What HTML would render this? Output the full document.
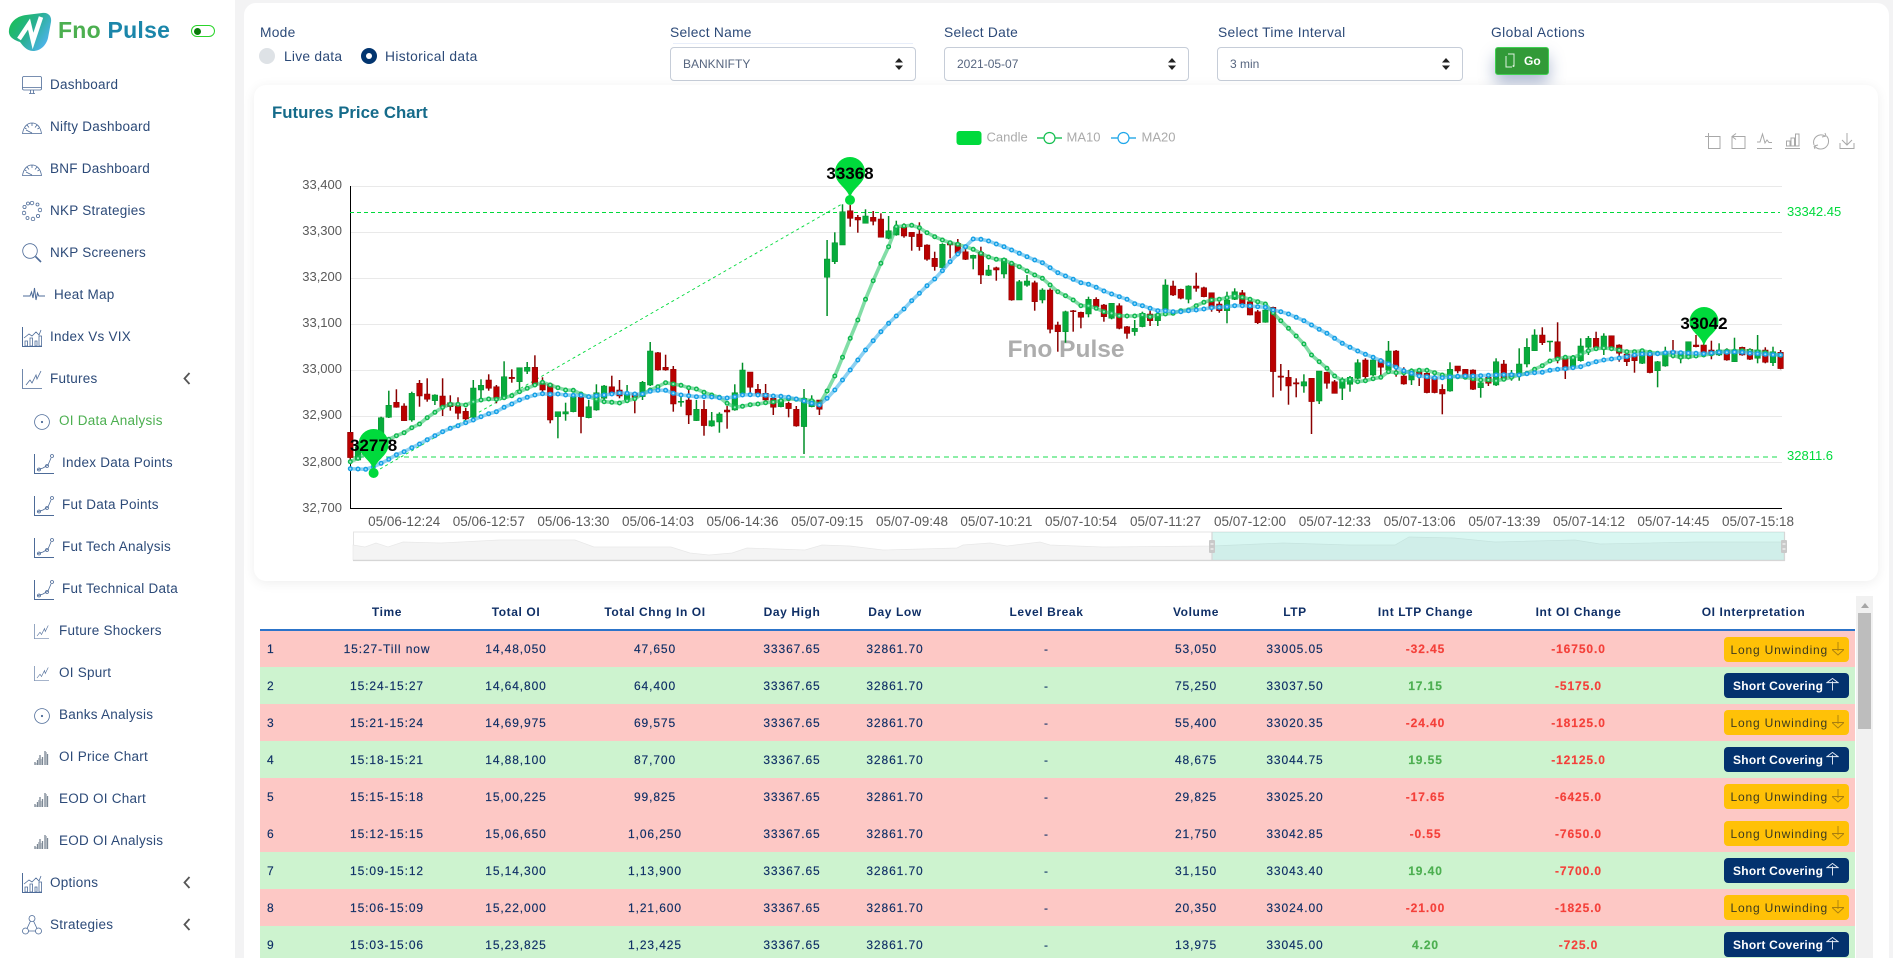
<!DOCTYPE html>
<html lang="en">
<head>
<meta charset="utf-8">
<title>Fno Pulse</title>
<style>
*{box-sizing:border-box}
html,body{margin:0;padding:0;width:1893px;height:958px;overflow:hidden;background:#f3f3f4;font-family:"Liberation Sans",sans-serif;color:#2b4a78}
aside{position:absolute;left:0;top:0;width:235px;height:958px;background:#fff;overflow:hidden}
.brand{position:absolute;left:58px;top:16px;font-size:23px;font-weight:700;letter-spacing:.25px;line-height:28px;white-space:nowrap}
.brand b:first-child{color:#4caf50}.brand b:last-child{color:#1b86aa}
.tog{position:absolute;left:191px;top:25px;width:24px;height:12px;border:1.5px solid #2bd42b;border-radius:7px;background:#fff}
.tog i{position:absolute;left:2px;top:1.5px;width:7px;height:7px;border-radius:50%;background:#0a7a0a}
nav a{position:absolute;height:20px;line-height:20px;margin-top:1px;font-size:13.5px;letter-spacing:.25px;color:#2c4a78;white-space:nowrap;text-decoration:none}
nav a.on{color:#4caf50}
nav svg{position:absolute;overflow:visible;fill:none;stroke:#4d6b98;stroke-width:.8}
main{position:absolute;left:244px;top:3px;width:1645px;height:955px;background:#fff;border-radius:12px 12px 0 0}
.lb{position:absolute;font-size:13.8px;letter-spacing:.25px;line-height:18px;margin-top:1px;color:#2c4a78;white-space:nowrap}
.rd{position:absolute;width:16px;height:16px;border-radius:50%;background:#dee2e6;top:46px}
.rd.on{background:#02356f}.rd.on:after{content:"";position:absolute;left:5px;top:5px;width:6px;height:6px;border-radius:50%;background:#fff}
select{position:absolute;top:47px;height:34px;border:1px solid #c6cdd8;border-radius:4px;background:#fff;appearance:none;-webkit-appearance:none;font:12px "Liberation Sans",sans-serif;color:#56657f;padding:0 12px;outline:0}
.ar{position:absolute;top:58px;width:8px;height:12px}
.go{position:absolute;left:1495px;top:47px;width:54px;height:28px;background:#329a38;border:1px solid #3fd052;border-radius:3px;box-shadow:0 9px 16px rgba(30,60,130,.35);color:#fff;font-size:12px;font-weight:700;line-height:26px;padding-left:28px}
.go svg{position:absolute;left:9px;top:5px}
.card{position:absolute;left:254px;top:85px;width:1624px;height:496px;background:#fff;border-radius:12px;box-shadow:0 2px 12px rgba(0,0,0,.07)}
.card h3{position:absolute;left:18px;top:17px;margin:0;font-size:16.8px;line-height:22px;color:#156b8a;font-weight:700;white-space:nowrap}
#chart{position:absolute;left:0;top:0}
#chart text{font-family:"Liberation Sans",sans-serif}
.tw{position:absolute;left:260px;top:596px;width:1613px;height:362px;overflow:hidden}
table{position:absolute;left:0;top:0;width:1595px;table-layout:fixed;border-collapse:collapse;font-size:12px;color:#0f2f66;letter-spacing:.9px}
th{height:34px;font-weight:700;letter-spacing:.6px;color:#0f2f66;border-bottom:2px solid #2c74c9;padding:0 0 2px;text-align:center}
td{height:37px;padding:0;text-align:center;white-space:nowrap;-webkit-text-stroke:.15px}
td:first-child{text-align:left;padding-left:7px}
tr.r td{background:#fdc8c5}tr.g td{background:#cdf3cf}
.neg{color:#f4403a;font-weight:700}.pos{color:#4caf50;font-weight:700}
.bt{display:block;margin:0 6px 0 auto;width:125px;height:25px;line-height:26.5px;border-radius:4px;font-size:12px;text-align:left;padding-left:6.5px;position:relative;-webkit-text-stroke:0}
.bt svg{position:absolute;right:5px;top:5px}
.bt.l{background:#ffc107;color:#3c3a20;letter-spacing:.82px}
.bt.s{background:#03326e;color:#fff;font-weight:700;letter-spacing:.25px;padding-left:9px}
.sb{position:absolute;left:1596px;top:0;width:17px;height:362px;background:#f1f1f1}
.sb i{position:absolute;left:2px;top:17px;width:13px;height:116px;background:#bdbdbd}
.sb b{position:absolute;left:4.5px;top:7px;width:0;height:0;border:4px solid transparent;border-top:0;border-bottom:5px solid #a6a6a6}
</style>
</head>
<body>
<svg width="0" height="0" style="position:absolute">
<defs>
<linearGradient id="lg" x1="0" y1="0" x2="1" y2=".6"><stop offset="0" stop-color="#16c24a"/><stop offset=".55" stop-color="#28b08f"/><stop offset="1" stop-color="#4db3e8"/></linearGradient>
<symbol id="mon" viewBox="0 0 20 18"><rect x=".5" y=".5" width="19" height="13.5" rx="1.5"/><path d="M.5 11.5H19.5M7 17.5H13M8.5 14V17.5M11.5 14V17.5"/></symbol>
<symbol id="gau" viewBox="0 0 20 12"><path d="M.5 11.5C1.5 5 5 1 10 1S18.500 5 19.500 11.500ZM4 8L10 11M10 1V4M5 3L7 5.500M15 3L13 5.500M3 6L4.500 7M17 6L15.500 7"/></symbol>
<symbol id="chn" viewBox="0 0 20 20"><circle cx="10" cy="2" r="1.800"/><circle cx="15.500" cy="3.500" r="1.500"/><circle cx="18" cy="9" r="1.800"/><circle cx="16" cy="15" r="1.600"/><circle cx="11" cy="18" r="1.800"/><circle cx="5.500" cy="17" r="1.500"/><circle cx="2" cy="12" r="1.800"/><circle cx="2.500" cy="6" r="1.600"/><circle cx="6" cy="2.500" r="1.500"/></symbol>
<symbol id="sea" viewBox="0 0 20 20"><circle cx="8" cy="8" r="7.300"/><path d="M13.500 13.500L19 19" stroke-width="1.600"/></symbol>
<symbol id="pul" viewBox="0 0 22 14"><path d="M0 9H7L8.500 5L10 11L11.500 1L13 13L14.500 6L15.800 9H22" stroke-width="1"/></symbol>
<symbol id="vix" viewBox="0 0 20 20"><path d="M.5 0V19.500H20" stroke-width="1"/><path d="M3 19V14H5.500V19ZM8 19V11H10.500V19ZM13 19V14H15V19ZM17 19V9H19.500V19ZM2 11L7 7L10 9L14 5L17 8L19 3"/></symbol>
<symbol id="fut" viewBox="0 0 20 20"><path d="M.5 0V19.500H20"/><path d="M4 16L8 11L10 14L14 6L15 10L19 2"/></symbol>
<symbol id="oi" viewBox="0 0 16 16"><circle cx="8" cy="8" r="7.400"/><circle cx="8" cy="8" r=".7" fill="#4d6b98"/></symbol>
<symbol id="pts" viewBox="0 0 20 22"><path d="M.5 1V20.500H20" stroke-width="1"/><path d="M3 17L9 15L14 12L17 5"/><circle cx="5" cy="16.500" r="1.500"/><circle cx="13" cy="13" r="1.500"/><circle cx="18" cy="3" r="1.500"/></symbol>
<symbol id="bar" viewBox="0 0 16 16"><path d="M1 16V13M3.500 16V11M6 16V6M8.500 16V8M11 16V2M13.500 16V5" stroke="#7b8794" stroke-width="1.300"/><path d="M2.200 16V14M4.700 16V9M7.200 16V10M12.300 16V3" stroke="#a9b1ba" stroke-width="1"/></symbol>
<symbol id="tri" viewBox="0 0 20 20"><circle cx="10" cy="3.500" r="3"/><circle cx="3.500" cy="16" r="3"/><circle cx="16.500" cy="16" r="3"/><path d="M8.500 6L5 13.500M11.500 6L15 13.500M6.500 16H13.500"/></symbol>
<symbol id="dn" viewBox="0 0 12 14"><path d="M6 0V9M0 7.500H12L6 13Z" fill="none" stroke="#a97f10" stroke-width=".9"/></symbol>
<symbol id="up" viewBox="0 0 14 14"><path d="M7 4V14M1 5.500L7 1L13 5.500Z" fill="none" stroke="#e8eef8" stroke-width="1"/></symbol>
</defs>
</svg>

<aside>
<svg style="position:absolute;left:5px;top:8px" width="60" height="48" viewBox="0 0 60 48">
<path d="M4 22C5 14 12 8 21 7L37 5C43 4 47 8 46 14L43 30C41 38 35 43 28 43C22 43 18 38 15 34C9 32 3 29 4 22Z" fill="url(#lg)"/>
<path d="M14 31L24 16L28 33L36 9" fill="none" stroke="#fff" stroke-width="4.500" stroke-linejoin="miter"/>
</svg>
<div class="brand"><b>Fno </b><b>Pulse</b></div>
<div class="tog"><i></i></div>
<nav>
<a style="left:50px;top:74px">Dashboard</a><svg style="left:22px;top:76px" width="20" height="18"><use href="#mon"/></svg>
<a style="left:50px;top:116px">Nifty Dashboard</a><svg style="left:22px;top:122px" width="20" height="12"><use href="#gau"/></svg>
<a style="left:50px;top:158px">BNF Dashboard</a><svg style="left:22px;top:164px" width="20" height="12"><use href="#gau"/></svg>
<a style="left:50px;top:200px">NKP Strategies</a><svg style="left:22px;top:201px" width="20" height="20"><use href="#chn"/></svg>
<a style="left:50px;top:242px">NKP Screeners</a><svg style="left:22px;top:243px" width="20" height="20"><use href="#sea"/></svg>
<a style="left:54px;top:284px">Heat Map</a><svg style="left:23px;top:287px" width="22" height="14" ><use href="#pul"/></svg>
<a style="left:50px;top:326px">Index Vs VIX</a><svg style="left:22px;top:327px" width="20" height="20"><use href="#vix"/></svg>
<a style="left:50px;top:368px">Futures</a><svg style="left:22px;top:369px" width="20" height="20"><use href="#fut"/></svg>
<svg style="left:183px;top:372px" width="8" height="13"><path d="M6.500 1L1.500 6.500L6.500 12" stroke="#555" stroke-width="1.800"/></svg>
<a class="on" style="left:59px;top:410px">OI Data Analysis</a><svg style="left:34px;top:414px" width="16" height="16"><use href="#oi"/></svg>
<a style="left:62px;top:452px">Index Data Points</a><svg style="left:34px;top:453px" width="20" height="22"><use href="#pts"/></svg>
<a style="left:62px;top:494px">Fut Data Points</a><svg style="left:34px;top:495px" width="20" height="22"><use href="#pts"/></svg>
<a style="left:62px;top:536px">Fut Tech Analysis</a><svg style="left:34px;top:537px" width="20" height="22"><use href="#pts"/></svg>
<a style="left:62px;top:578px">Fut Technical Data</a><svg style="left:34px;top:579px" width="20" height="22"><use href="#pts"/></svg>
<a style="left:59px;top:620px">Future Shockers</a><svg style="left:34px;top:624px" width="15" height="15"><use href="#fut"/></svg>
<a style="left:59px;top:662px">OI Spurt</a><svg style="left:34px;top:666px" width="15" height="15"><use href="#fut"/></svg>
<a style="left:59px;top:704px">Banks Analysis</a><svg style="left:34px;top:708px" width="16" height="16"><use href="#oi"/></svg>
<a style="left:59px;top:746px">OI Price Chart</a><svg style="left:34px;top:749px" width="16" height="16"><use href="#bar"/></svg>
<a style="left:59px;top:788px">EOD OI Chart</a><svg style="left:34px;top:791px" width="16" height="16"><use href="#bar"/></svg>
<a style="left:59px;top:830px">EOD OI Analysis</a><svg style="left:34px;top:833px" width="16" height="16"><use href="#bar"/></svg>
<a style="left:50px;top:872px">Options</a><svg style="left:22px;top:873px" width="20" height="20"><use href="#vix"/></svg>
<svg style="left:183px;top:876px" width="8" height="13"><path d="M6.500 1L1.500 6.500L6.500 12" stroke="#555" stroke-width="1.800"/></svg>
<a style="left:50px;top:914px">Strategies</a><svg style="left:22px;top:915px" width="20" height="20"><use href="#tri"/></svg>
<svg style="left:183px;top:918px" width="8" height="13"><path d="M6.500 1L1.500 6.500L6.500 12" stroke="#555" stroke-width="1.800"/></svg>
</nav>
</aside>

<main></main>

<div class="lb" style="left:260px;top:23px">Mode</div>
<span class="rd" style="left:259px;top:48px"></span><div class="lb" style="left:284px;top:47px">Live data</div>
<span class="rd on" style="left:361px;top:48px"></span><div class="lb" style="left:385px;top:47px;letter-spacing:.35px">Historical data</div>

<div class="lb" style="left:670px;top:23px">Select Name</div>
<div style="position:absolute;left:673px;top:43px;width:240px;height:1px;background:#e8eefa"></div>
<select style="left:670px;width:246px"><option>BANKNIFTY</option></select>
<svg class="ar" style="left:895px" viewBox="0 0 8 12"><path d="M4 0L8 4.500H0ZM4 12L8 7.500H0Z" fill="#222"/></svg>

<div class="lb" style="left:944px;top:23px">Select Date</div>
<select style="left:944px;width:245px"><option>2021-05-07</option></select>
<svg class="ar" style="left:1168px" viewBox="0 0 8 12"><path d="M4 0L8 4.500H0ZM4 12L8 7.500H0Z" fill="#222"/></svg>

<div class="lb" style="left:1218px;top:23px;letter-spacing:.32px">Select Time Interval</div>
<select style="left:1217px;width:246px"><option>3 min</option></select>
<svg class="ar" style="left:1442px" viewBox="0 0 8 12"><path d="M4 0L8 4.500H0ZM4 12L8 7.500H0Z" fill="#222"/></svg>

<div class="lb" style="left:1491px;top:23px;letter-spacing:.42px">Global Actions</div>
<div class="go"><svg width="10" height="15" viewBox="0 0 10 15"><path d="M3 1H9V13M1 3V14H7" fill="none" stroke="#dff2e0" stroke-width="1"/><circle cx="8.500" cy="13" r="1" fill="#dff2e0"/></svg>Go</div>

<section class="card"><h3>Futures Price Chart</h3></section>

<svg id="chart" width="1893" height="600" viewBox="0 0 1893 600" fill="none" style="position:absolute;left:0;top:0">
<!-- grid -->
<g stroke="#e9e9e9" stroke-width="1">
<path d="M350 186.500H1782M350 232.500H1782M350 278.500H1782M350 324.500H1782M350 370.500H1782M350 416.500H1782M350 462.500H1782"/>
</g>
<path d="M350.500 186V508.500H1782" stroke="#000" stroke-width="1"/>
<g font-size="13" fill="#5a5a5a" text-anchor="end">
<text x="342" y="189">33,400</text><text x="342" y="235">33,300</text><text x="342" y="281">33,200</text><text x="342" y="327">33,100</text><text x="342" y="373">33,000</text><text x="342" y="419">32,900</text><text x="342" y="466">32,800</text><text x="342" y="512">32,700</text>
</g>
<g font-size="13.500" fill="#5a5a5a" text-anchor="middle">
<text x="404.200" y="526">05/06-12:24</text><text x="488.800" y="526">05/06-12:57</text><text x="573.400" y="526">05/06-13:30</text><text x="658" y="526">05/06-14:03</text><text x="742.500" y="526">05/06-14:36</text><text x="827.200" y="526">05/07-09:15</text><text x="912" y="526">05/07-09:48</text><text x="996.400" y="526">05/07-10:21</text><text x="1081" y="526">05/07-10:54</text><text x="1165.500" y="526">05/07-11:27</text><text x="1250" y="526">05/07-12:00</text><text x="1334.800" y="526">05/07-12:33</text><text x="1419.600" y="526">05/07-13:06</text><text x="1504.400" y="526">05/07-13:39</text><text x="1589" y="526">05/07-14:12</text><text x="1673.400" y="526">05/07-14:45</text><text x="1758" y="526">05/07-15:18</text>
</g>
<text x="1066" y="357" font-size="24.500" font-weight="700" fill="#adadad" text-anchor="middle">Fno Pulse</text>
<!-- marks -->
<path d="M350 212.500H1780" stroke="#00da3c" stroke-dasharray="4 3"/>
<path d="M350 457H1780" stroke="#00da3c" stroke-opacity=".6" stroke-width="1.400" stroke-dasharray="5 4"/>
<path d="M380 469L842 204" stroke="#00da3c" stroke-dasharray="3 3" stroke-width=".9"/>
<text x="1787" y="216" font-size="13" fill="#00da3c">33342.45</text>
<text x="1787" y="460" font-size="13" fill="#00da3c">32811.6</text>
<g id="cd"></g>
<g id="ml"></g>
<!-- pins -->
<g fill="#00da3c">
<path d="M850 198C847 187 835 184 835 172A15 15 0 1 1 865 172C865 184 853 187 850 198Z"/><circle cx="850" cy="200" r="5"/>
<path d="M373.600 470C370.600 459 358.600 456 358.600 444A15 15 0 1 1 388.600 444C388.600 456 376.600 459 373.600 470Z"/><circle cx="373.600" cy="473" r="5"/>
<path d="M1704 346C1701 335 1689.500 332 1689.500 321.500A14.500 14.500 0 1 1 1718.500 321.500C1718.500 332 1707 335 1704 346Z"/>
</g>
<g font-size="17" font-weight="700" fill="#000" text-anchor="middle">
<text x="850" y="179">33368</text><text x="373.600" y="451">32778</text><text x="1704" y="329">33042</text>
</g>
<!-- legend -->
<rect x="956.500" y="131" width="25" height="14" rx="3" fill="#00da3c"/>
<g font-size="13" fill="#aaa"><text x="986.500" y="141.500">Candle</text><text x="1066.500" y="141.500">MA10</text><text x="1141.500" y="141.500">MA20</text></g>
<path d="M1037 138H1062" stroke="#27c45e" stroke-width="1.500"/><circle cx="1049.500" cy="138" r="5.500" fill="#fff" stroke="#14bf50" stroke-width="1.200"/>
<path d="M1111 138H1136" stroke="#34aee8" stroke-width="1.500"/><circle cx="1123.500" cy="138" r="5.500" fill="#fff" stroke="#1fa7ea" stroke-width="1.200"/>
<!-- toolbox -->
<g stroke="#a8a8a8" stroke-width="1">
<path d="M1705 136.500H1720V148.500H1708.500V133"/>
<path d="M1732 148.500V136.500H1745V148.500ZM1732 136.500L1736 133.500M1732 136.500L1736 139.500"/>
<path d="M1757 148.500H1772M1757 142H1760L1762.500 134L1765 143L1767 140L1769 142.500H1772"/>
<path d="M1785 148.500H1800M1786.500 146V141H1790V146ZM1791 146V138H1794.500V146ZM1795.500 146V134H1799V146Z"/>
<path d="M1814 145A7.500 7.500 0 0 1 1825 136M1826 136L1825 133M1826 136L1822 137M1826.500 136A7.500 7.500 0 0 1 1815 146.500M1814 146L1815 149M1814 146L1818 145"/>
<path d="M1847 133V145M1842 140L1847 145L1852 140M1840 143V148.500H1854V143"/>
</g>
<!-- slider -->
<rect x="353.500" y="532" width="1431" height="28.500" fill="#fff" stroke="#e4e4e4"/>
<path d="M353 545L365 547L376 543L388 547L403 542L441 543L499 540L575 540L594 547L633 547L671 547L690 553L709 555L732 553L747 548L805 550L822 545L850 546L883 550L957 548L963 545L990 543L1007 546L1040 542L1050 545L1103 547L1212 546L1283 543L1350 545L1395 545L1409 537L1454 538L1495 542L1575 540L1600 544L1696 542L1784 542V560H353Z" fill="#f4f4f4" stroke="#e8e8e8" stroke-width=".7"/>
<rect x="1212" y="532" width="572" height="28" fill="#2fd0b5" fill-opacity=".18"/>
<path d="M1212 532V560M1784.500 532V561M353 560.500H1785" stroke="#d6d6d6" stroke-width="1.200"/>
<rect x="1209" y="540" width="6" height="13" rx="1" fill="#c9c9c9"/><rect x="1781" y="540" width="6" height="13" rx="1" fill="#c9c9c9"/>
<path d="M1210.500 544H1213.500M1210.500 549H1213.500M1782.500 544H1785.500M1782.500 549H1785.500" stroke="#fff"/>
</svg>

<div class="tw">
<table>
<colgroup><col style="width:41px"><col style="width:172px"><col style="width:86px"><col style="width:192px"><col style="width:82px"><col style="width:124px"><col style="width:179px"><col style="width:120px"><col style="width:78px"><col style="width:183px"><col style="width:123px"><col style="width:215px"></colgroup>
<thead><tr><th></th><th>Time</th><th>Total OI</th><th>Total Chng In OI</th><th>Day High</th><th>Day Low</th><th>Level Break</th><th>Volume</th><th>LTP</th><th>Int LTP Change</th><th>Int OI Change</th><th style="padding-left:12px">OI Interpretation</th></tr></thead>
<tbody>
<tr class="r"><td>1</td><td>15:27-Till now</td><td>14,48,050</td><td>47,650</td><td>33367.65</td><td>32861.70</td><td>-</td><td>53,050</td><td>33005.05</td><td class="neg">-32.45</td><td class="neg">-16750.0</td><td><span class="bt l">Long Unwinding<svg width="12" height="14"><use href="#dn"/></svg></span></td></tr>
<tr class="g"><td>2</td><td>15:24-15:27</td><td>14,64,800</td><td>64,400</td><td>33367.65</td><td>32861.70</td><td>-</td><td>75,250</td><td>33037.50</td><td class="pos">17.15</td><td class="neg">-5175.0</td><td><span class="bt s">Short Covering<svg width="13" height="14" viewBox="0 0 14 14" style="right:10px;top:4px"><use href="#up"/></svg></span></td></tr>
<tr class="r"><td>3</td><td>15:21-15:24</td><td>14,69,975</td><td>69,575</td><td>33367.65</td><td>32861.70</td><td>-</td><td>55,400</td><td>33020.35</td><td class="neg">-24.40</td><td class="neg">-18125.0</td><td><span class="bt l">Long Unwinding<svg width="12" height="14"><use href="#dn"/></svg></span></td></tr>
<tr class="g"><td>4</td><td>15:18-15:21</td><td>14,88,100</td><td>87,700</td><td>33367.65</td><td>32861.70</td><td>-</td><td>48,675</td><td>33044.75</td><td class="pos">19.55</td><td class="neg">-12125.0</td><td><span class="bt s">Short Covering<svg width="13" height="14" viewBox="0 0 14 14" style="right:10px;top:4px"><use href="#up"/></svg></span></td></tr>
<tr class="r"><td>5</td><td>15:15-15:18</td><td>15,00,225</td><td>99,825</td><td>33367.65</td><td>32861.70</td><td>-</td><td>29,825</td><td>33025.20</td><td class="neg">-17.65</td><td class="neg">-6425.0</td><td><span class="bt l">Long Unwinding<svg width="12" height="14"><use href="#dn"/></svg></span></td></tr>
<tr class="r"><td>6</td><td>15:12-15:15</td><td>15,06,650</td><td>1,06,250</td><td>33367.65</td><td>32861.70</td><td>-</td><td>21,750</td><td>33042.85</td><td class="neg">-0.55</td><td class="neg">-7650.0</td><td><span class="bt l">Long Unwinding<svg width="12" height="14"><use href="#dn"/></svg></span></td></tr>
<tr class="g"><td>7</td><td>15:09-15:12</td><td>15,14,300</td><td>1,13,900</td><td>33367.65</td><td>32861.70</td><td>-</td><td>31,150</td><td>33043.40</td><td class="pos">19.40</td><td class="neg">-7700.0</td><td><span class="bt s">Short Covering<svg width="13" height="14" viewBox="0 0 14 14" style="right:10px;top:4px"><use href="#up"/></svg></span></td></tr>
<tr class="r"><td>8</td><td>15:06-15:09</td><td>15,22,000</td><td>1,21,600</td><td>33367.65</td><td>32861.70</td><td>-</td><td>20,350</td><td>33024.00</td><td class="neg">-21.00</td><td class="neg">-1825.0</td><td><span class="bt l">Long Unwinding<svg width="12" height="14"><use href="#dn"/></svg></span></td></tr>
<tr class="g"><td>9</td><td>15:03-15:06</td><td>15,23,825</td><td>1,23,425</td><td>33367.65</td><td>32861.70</td><td>-</td><td>13,975</td><td>33045.00</td><td class="pos">4.20</td><td class="neg">-725.0</td><td><span class="bt s">Short Covering<svg width="13" height="14" viewBox="0 0 14 14" style="right:10px;top:4px"><use href="#up"/></svg></span></td></tr>
</tbody>
</table>
<div class="sb"><b></b><i></i></div>
</div>

<script>
(function(){
var A="r427,503,427,510 g470,510,455,512 g450,490,440,495 g440,480,430,490 g383,432,380,450 g346,382,302,384 r337,352,298,353 r348,392,340,392 g310,390,305,395 r280,318,270,350 r312,328,265,335 g315,332,313,345 r318,350,265,378 r338,350,316,362 r348,370,322,388 r364,387,354,390 g294,382,270,385 g286,300,268,330 r270,295,253,302 r290,325,285,340 g260,325,214,328 r262,266,238,278 g233,275,233,305 g232,244,216,252 r232,285,196,290 r280,300,262,305 r282,390,278,400 g365,380,365,445 g365,372,338,392 g320,365,315,367 r322,380,318,430 g350,383,330,385 g308,360,283,362 g288,325,285,330 r290,310,257,318 r300,318,270,325 g312,330,285,335 r310,322,305,370 g277,320,273,330 g183,285,156,288 r188,240,186,242 r232,240,194,242 r238,342,228,365 g334,337,320,350 r330,375,300,402 g358,392,330,393 r358,407,330,437 g392,408,366,410 g372,396,367,428 r360,366,348,416 g308,360,283,362 g240,310,218,312 r246,292,246,312 r298,312,282,316 r310,330,282,332 r325,352,316,375 g330,350,320,352 r340,356,335,382 r358,408,348,410 g325,410,297,492 g330,350,316,352 r330,358,330,375";
var B="g777,832,720,948 g728,785,697,792 g635,735,613,735 r632,655,615,680 r652,660,645,698 g648,670,628,670 r652,664,633,676 r657,712,640,712 g692,715,648,718 g680,705,662,707 r682,708,670,713 r697,710,697,752 r702,740,667,752 r735,778,733,782 r775,800,755,812 g733,803,730,805 r728,735,725,775 r730,760,717,762 r755,778,735,780 g766,775,764,808 r757,825,740,852 g810,826,795,828 r803,810,800,842 g776,822,773,835 r790,900,785,902 g845,900,840,900 g843,856,825,860 r848,905,842,932 g870,900,865,910 r870,988,865,1000";
var C="r105,125,95,185 g65,125,62,158 r62,65,60,125 r67,82,65,115 g28,72,20,82 r28,50,22,58 r45,80,42,95 g40,85,40,88 r47,115,40,118 r110,130,108,146 g115,125,90,137 g70,110,65,112 r72,92,62,108 g72,92,65,108 g-15,60,-32,62 r-12,15,-28,18 r-2,25,-4,28 g-12,28,-14,40 r-12,-5,-52,5 r-7,20,-10,22 r8,55,8,65 r42,62,35,68 g30,62,5,100 g5,28,-5,30 r8,42,0,45 r35,75,25,76 r65,98,60,102 g60,97,50,98 r52,245,50,322 r258,262,222,302 r262,288,240,344 r278,282,265,322 g275,288,253,308 r265,335,265,432 g243,333,243,342 r247,280,245,296 r275,310,270,310 g268,295,262,330 g262,283,258,305 g218,265,208,267 r210,260,205,268 g210,255,205,258 r210,232,205,258 g183,240,153,242 r183,232,180,260 r258,282,232,284 g240,270,235,285 r245,255,240,288 r250,308,240,310 r262,308,250,310 r298,312,283,373 g238,303,217,305 r228,243,228,250 r238,262,238,265 r240,298,238,300 g278,293,255,323 r262,280,250,288 g215,285,205,288 r222,268,210,270 g250,262,240,272 g222,252,175,272 g172,222,145,232 g135,182,118,183 r135,158,112,165 g153,156,153,185 r155,205,97,220 r205,240,198,267 g200,232,195,235 g168,212,145,215 g145,172,138,195 r145,172,125,178 g138,178,130,195 r137,172,137,178 r165,190,163,215 r192,215,190,228 r195,212,195,248 g183,220,178,222 r190,248,185,250 g215,242,213,292 g185,228,170,230 r183,190,150,205 g185,205,183,220 g155,205,155,208 r165,170,135,172 r165,190,160,195 r180,195,152,208 g180,195,160,198 r180,210,175,212 g180,215,143,216 r172,195,170,197 r178,208,175,210 g180,205,135,220 r180,217,172,220 g185,218,170,228 r187,236,180,238";
var M10="515 505 490 470 455 448 437 428 413 402 383 367 352 343 343 345 335 330 327 328 323 317 305 295 285 277 285 293 300 301 312 320 328 335 337 339 332 326 312 300 290 278 282 286 293 297 307 315 322 340 352 349 344 342 338 336 332 326 328 329 332 343 303 258 202 145 90 28 -28 -80 -130 -190 -192 -194 -187 -172 -160 -150 -142 -137 -130 -122 -110 -99 -92 -90 -80 -70 -57 -45 -35 -15 5 17 30 47 47 55 65 70 77 78 78 75 80 75 72 70 62 60 47 37 30 28 23 18 22 28 35 42 68 92 115 138 162 195 215 235 258 272 268 275 272 266 262 245 248 248 243 241 241 248 255 258 260 262 266 270 270 272 268 262 255 250 238 227 213 207 202 203 193 182 176 174 176 180 185 185 182 187 190 192 197 202 200 198 195 192 185 183 183 182 183 185 188 192 196";
var M20="536 537 538 530 520 508 494 485 473 462 449 437 425 415 407 398 390 380 371 365 352 342 330 322 315 311 313 312 315 316 316 320 317 315 312 309 310 312 312 304 301 301 310 315 317 320 320 321 323 324 320 315 314 315 316 318 319 322 327 333 340 345 325 300 270 240 210 180 152 125 100 78 57 32 10 -13 -33 -58 -85 -108 -130 -153 -152 -147 -138 -130 -120 -110 -100 -90 -82 -67 -52 -42 -32 -22 -17 -8 3 12 20 28 41 47 55 62 62 65 65 62 60 57 53 52 50 47 47 48 50 52 60 65 72 82 92 105 118 130 145 160 172 183 193 202 212 222 232 242 250 258 260 263 263 261 259 258 258 257 256 255 254 254 255 251 248 247 241 238 236 233 230 222 215 210 207 204 200 195 192 192 191 188 187 188 189 190 191 189 187 187 186 187 190 191 193 194 195";
function X(i){return 350.3+7.69*i}
var h="";
function add(str,start,base){
 str.split(" ").forEach(function(s,k){
  var c=s[0],v=s.slice(1).split(",").map(Number),i=start+k,x=X(i);
  var fill=c=="g"?"#07ab3c":"#b90000",st=c=="g"?"#008F28":"#8A0000";
  var Y=function(n){return (base+n/3).toFixed(1)};
  h+='<path d="M'+x.toFixed(1)+' '+Y(v[2])+'V'+Y(v[3])+'" stroke="'+st+'" stroke-width="1.5"/>';
  var t=base+v[0]/3,b=base+v[1]/3;
  h+='<rect x="'+(x-2.8).toFixed(1)+'" y="'+t.toFixed(1)+'" width="5.6" height="'+Math.max(b-t,1).toFixed(1)+'" fill="'+fill+'" stroke="'+st+'" stroke-width=".5"/>';
 });
}
add(A,0,290);add(B,62,0);add(C,92,290);
document.getElementById("cd").innerHTML=h;
function line(str,col,dot,mid){
 var p=str.split(" ").map(Number).map(function(v,i){return [X(i),290+v/3]});
 var d="",o="";
 p.forEach(function(q,i){
  d+=(i?"L":"M")+q[0].toFixed(1)+" "+q[1].toFixed(1);
  o+='<circle cx="'+q[0].toFixed(1)+'" cy="'+q[1].toFixed(1)+'" r="1.8"/>';
 });
 return '<path d="'+d+'" stroke="'+col+'" stroke-opacity=".6" stroke-width="3.6" stroke-linejoin="round"/><g fill="'+mid+'" stroke="'+dot+'" stroke-width="1.4">'+o+'</g>';
}
document.getElementById("ml").innerHTML=line(M10,"#2fc66a","#0fb84e","#9fe8c0")+line(M20,"#3fb2ea","#139fe6","#9fdcf8");
})();
</script>
</body>
</html>
